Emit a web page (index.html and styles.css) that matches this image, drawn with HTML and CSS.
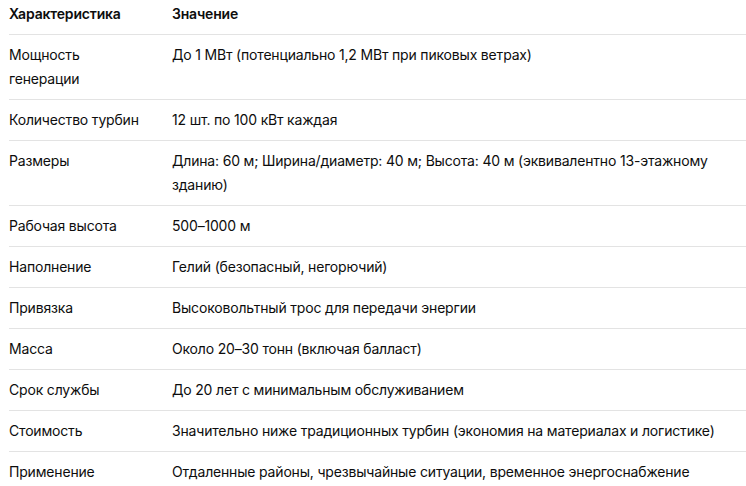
FILE: index.html
```html
<!DOCTYPE html>
<html lang="ru">
<head>
<meta charset="utf-8">
<link rel="stylesheet" href="styles.css">
</head>
<body>
<div class="wrap">
<table class="spec">
<colgroup><col class="c1"><col class="c2"></colgroup>
<thead>
<tr><th>Характеристика</th><th>Значение</th></tr>
</thead>
<tbody>
<tr><td>Мощность генерации</td><td>До 1 МВт (потенциально 1,2 МВт при пиковых ветрах)</td></tr>
<tr><td>Количество турбин</td><td>12 шт. по 100 кВт каждая</td></tr>
<tr><td>Размеры</td><td>Длина: 60 м; Ширина/диаметр: 40 м; Высота: 40 м (эквивалентно 13-этажному зданию)</td></tr>
<tr><td>Рабочая высота</td><td>500–1000 м</td></tr>
<tr><td>Наполнение</td><td>Гелий (безопасный, негорючий)</td></tr>
<tr><td>Привязка</td><td>Высоковольтный трос для передачи энергии</td></tr>
<tr><td>Масса</td><td>Около 20–30 тонн (включая балласт)</td></tr>
<tr><td>Срок службы</td><td>До 20 лет с минимальным обслуживанием</td></tr>
<tr><td>Стоимость</td><td>Значительно ниже традиционных турбин (экономия на материалах и логистике)</td></tr>
<tr><td>Применение</td><td>Отдаленные районы, чрезвычайные ситуации, временное энергоснабжение</td></tr>
</tbody>
</table>
</div>
</body>
</html>
```

FILE: styles.css
```css
html, body {
  margin: 0;
  padding: 0;
  background: #ffffff;
}
body {
  font-family: Inter, "Noto Sans", sans-serif;
  font-size: 14px;
  line-height: 24px;
  letter-spacing: -0.18px;
  color: #0d0d0d;
}
.wrap {
  padding-left: 9px;
}
.spec {
  width: 737px;
  border-collapse: collapse;
  table-layout: fixed;
}
.c1 { width: 163px; }
.spec th,
.spec td {
  text-align: left;
  vertical-align: top;
  border-bottom: 1px solid #e3e3e3;
  padding: 8px 0 8px 0;
}
.spec th {
  font-weight: 600;
  padding-top: 2px;
}
.spec th:first-child,
.spec td:first-child {
  padding-right: 22px;
}
```
